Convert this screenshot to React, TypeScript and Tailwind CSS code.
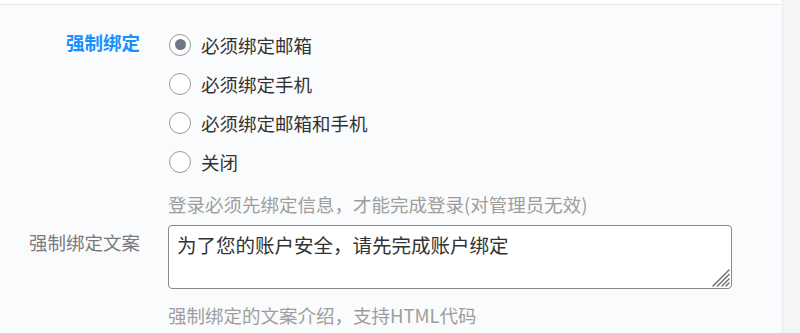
import React from "react";

function Radio({ checked, label }: { checked?: boolean; label: string }) {
  return (
    <div className="flex h-[39px] items-center">
      <span className="ml-[1px] flex h-[22px] w-[22px] shrink-0 items-center justify-center rounded-full border-[1.5px] border-[#9a9a9a] bg-white">
        {checked && <span className="h-[11px] w-[11px] rounded-full bg-[#6d7884]" />}
      </span>
      <span className="ml-[10px] text-[18.5px] leading-[28px] text-[#333]">{label}</span>
    </div>
  );
}

export default function App() {
  return (
    <div
      className="flex h-[333px] w-[800px] overflow-hidden bg-[#fafbfc]"
      style={{ fontFamily: '"Noto Sans CJK SC", "Noto Sans", sans-serif' }}
    >
      <div className="flex w-[783px] flex-col border-r border-[#e8eaed]">
        <div className="h-[4px] bg-white" />
        <div className="border-t border-[#e6e8eb]" />
        <div className="flex pt-[20px]">
          <div className="w-[140px] text-right text-[18.5px] font-bold leading-[35px] text-[#1890ff]">
            强制绑定
          </div>
          <div className="ml-[28px] flex flex-col">
            <Radio checked label="必须绑定邮箱" />
            <Radio label="必须绑定手机" />
            <Radio label="必须绑定邮箱和手机" />
            <Radio label="关闭" />
            <div className="mt-[9px] text-[18.5px] leading-[28px] text-[#9e9e9e]">
              登录必须先绑定信息，才能完成登录(对管理员无效)
            </div>
          </div>
        </div>
        <div className="mt-[7px] flex">
          <div className="mt-[3px] w-[140px] text-right text-[18.5px] leading-[28px] text-[#7a7a7a]">
            强制绑定文案
          </div>
          <div className="ml-[28px] flex flex-col">
            <div className="relative h-[64px] w-[564px]">
              <textarea
                className="h-full w-full resize-none rounded-[4px] border border-[#8a8a8a] bg-white px-[8px] pt-[5px] text-[19.5px] leading-[28px] text-[#333] outline-none"
                style={{ fontFamily: '"Noto Sans CJK SC", "Noto Sans", sans-serif' }}
                defaultValue="为了您的账户安全，请先完成账户绑定"
              />
              <svg
                className="pointer-events-none absolute bottom-[2px] right-[2px]"
                width="18"
                height="18"
                viewBox="0 0 18 18"
              >
                <g stroke="#6f6f6f" strokeWidth="1.4" strokeLinecap="round">
                  <line x1="1" y1="17" x2="17" y2="1" />
                  <line x1="5.5" y1="17" x2="17" y2="5.5" />
                  <line x1="10" y1="17" x2="17" y2="10" />
                  <line x1="14" y1="17" x2="17" y2="14" />
                </g>
              </svg>
            </div>
            <div className="mt-[12px] text-[18.5px] leading-[28px] text-[#9e9e9e]">
              强制绑定的文案介绍，支持HTML代码
            </div>
          </div>
        </div>
      </div>
      <div className="flex-1 bg-[#f4f5f7]" />
    </div>
  );
}
